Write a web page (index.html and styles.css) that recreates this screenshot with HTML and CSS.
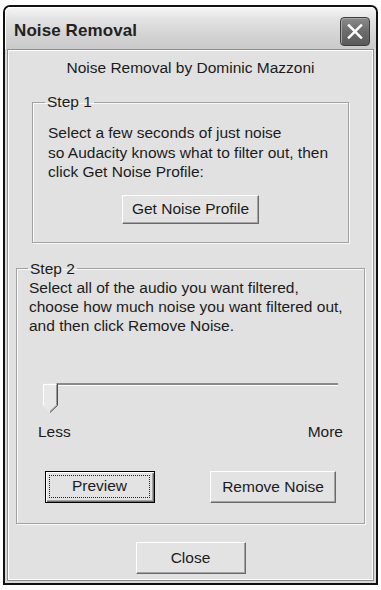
FILE: index.html
```html
<!DOCTYPE html>
<html>
<head>
<meta charset="utf-8">
<link rel="stylesheet" href="styles.css">
</head>
<body>
<div class="window">
  <div class="titlebar">
    <span class="title">Noise Removal</span>
    <button class="close-x" aria-label="Close">
      <svg width="30" height="29" viewBox="0 0 30 29">
        <path d="M8.5 8 L21.5 21 M21.5 8 L8.5 21" stroke="#fff" stroke-width="2.6" stroke-linecap="square" fill="none"/>
      </svg>
    </button>
  </div>
  <div class="client">
    <p class="credit">Noise Removal by Dominic Mazzoni</p>
    <fieldset class="group step1">
      <legend>Step 1</legend>
      <p class="desc">Select a few seconds of just noise<br>so Audacity knows what to filter out, then<br>click Get Noise Profile:</p>
      <div class="center"><button class="btn btn-profile">Get Noise Profile</button></div>
    </fieldset>
    <fieldset class="group step2">
      <legend>Step 2</legend>
      <p class="desc">Select all of the audio you want filtered,<br>choose how much noise you want filtered out,<br>and then click Remove Noise.</p>
      <div class="slider">
        <div class="track"></div>
        <svg class="thumb" width="16" height="30" viewBox="0 0 16 30">
          <path d="M0.5 0.5 H15.5 V22.5 L8 29.5 L0.5 22.5 Z" fill="#e8e8e8"/>
          <path d="M1.5 22 V1.5 H14.5" stroke="#ffffff" stroke-width="1" fill="none"/>
          <path d="M14.5 1.5 V22.2 L8 28.3" stroke="#9a9a9a" stroke-width="1" fill="none"/>
          <path d="M15.5 0.5 V22.5 L8 29.5" stroke="#505050" stroke-width="1" fill="none"/>
        </svg>
      </div>
      <div class="scale"><span>Less</span><span>More</span></div>
      <div class="actions">
        <button class="btn btn-default"><span class="focus">Preview</span></button>
        <button class="btn btn-remove">Remove Noise</button>
      </div>
    </fieldset>
    <div class="center"><button class="btn btn-close">Close</button></div>
  </div>
</div>
</body>
</html>
```

FILE: styles.css
```css
* { box-sizing: border-box; }

html, body {
  margin: 0;
  padding: 0;
  background: #ffffff;
}

body {
  font-family: "Liberation Sans", Arial, sans-serif;
  font-size: 15.5px;
  color: #1c1c1c;
}

.window {
  margin: 5px 0 0 3px;
  width: 375px;
  height: 580px;
  border: 2px solid #111;
  border-radius: 7px 7px 0 0;
  background: #d9d9d9;
  display: flex;
  flex-direction: column;
  overflow: hidden;
}

.titlebar {
  height: 42px;
  flex: none;
  display: flex;
  align-items: center;
  justify-content: space-between;
  padding: 6px 6px 0 9px;
  background: linear-gradient(to bottom, #f6f6f6 0%, #e2e2e2 30%, #d2d2d2 70%, #cacaca 100%);
  border-radius: 5px 5px 0 0;
  box-shadow: inset 1px 1px 0 #ffffff;
}

.title {
  font-weight: bold;
  font-size: 17px;
  color: #222;
  letter-spacing: 0.1px;
}

.close-x {
  width: 30px;
  height: 29px;
  padding: 0;
  margin: 0;
  border: 1px solid #3e3e3e;
  border-radius: 4px;
  background: linear-gradient(to bottom, #8a8a8a 0%, #6c6c6c 50%, #5a5a5a 100%);
  box-shadow: inset 1px 1px 0 #a6a6a6;
  display: flex;
  align-items: center;
  justify-content: center;
}

.close-x svg { display: block; }

.client {
  flex: 1;
  margin: 0 2px 2px 2px;
  border: 1px solid #8e8e8e;
  box-shadow: inset 1px 1px 0 #ffffff, inset -1px -1px 0 #ffffff;
  background: #e1e1e1;
  padding: 8px 0 6px;
  display: flex;
  flex-direction: column;
}

.credit {
  margin: 0;
  line-height: 20px;
  text-align: center;
}

.group {
  margin: 0;
  border: 1px solid #a2a2a2;
  box-shadow: 1px 1px 0 #f8f8f8, inset 1px 1px 0 #f8f8f8;
  min-width: 0;
}

.group legend {
  line-height: 18px;
  padding: 0 2px;
}

.desc {
  margin: 0;
}

.step1 {
  margin: 15px 24px 0;
  padding: 12px 15px 18px;
}

.step1 legend { margin-left: -3px; }

.step1 .desc { line-height: 19.5px; }

.step1 .center { margin-top: 13px; }

.step2 {
  margin: 17px 8px 0 8px;
  padding: 0 12px 20px;
}

.step2 legend { margin-left: -1px; }

.step2 .desc { line-height: 19px; }

.center {
  display: flex;
  justify-content: center;
}

.btn {
  font-family: "Liberation Sans", Arial, sans-serif;
  font-size: 15.5px;
  color: #1c1c1c;
  background: #e3e3e3;
  border: 1px solid;
  border-color: #ffffff #6a6a6a #6a6a6a #ffffff;
  box-shadow: inset -1px -1px 0 #a4a4a4;
  padding: 0;
  margin: 0;
}

.btn-profile {
  width: 137px;
  height: 29px;
}

.slider {
  position: relative;
  margin: 48px 0 0 13px;
  width: 296px;
  height: 30px;
}

.track {
  margin: 13px 0 0 14px;
  height: 3px;
  border-top: 2px solid #8a8a8a;
  border-bottom: 1px solid #ffffff;
}

.thumb {
  position: absolute;
  left: 0;
  top: 0;
  display: block;
}

.scale {
  margin-top: 9px;
  line-height: 20px;
  display: flex;
  justify-content: space-between;
  padding: 0 9px;
}

.actions {
  margin-top: 29px;
  display: flex;
  justify-content: space-between;
  padding: 0 16px 0 16px;
}

.btn-default {
  width: 110px;
  height: 32px;
  border: 1px solid #000;
  box-shadow: inset 1px 1px 0 #ffffff, inset -1px -1px 0 #6a6a6a, inset -2px -2px 0 #a4a4a4;
  display: flex;
  padding: 3px 4px 4px 3px;
}

.focus {
  flex: 1;
  border: 1px dotted #222;
  display: flex;
  align-items: center;
  justify-content: center;
}

.btn-remove {
  width: 126px;
  height: 32px;
}

.client > .center { margin-top: 18px; }

.btn-close {
  width: 110px;
  height: 32px;
}
```
